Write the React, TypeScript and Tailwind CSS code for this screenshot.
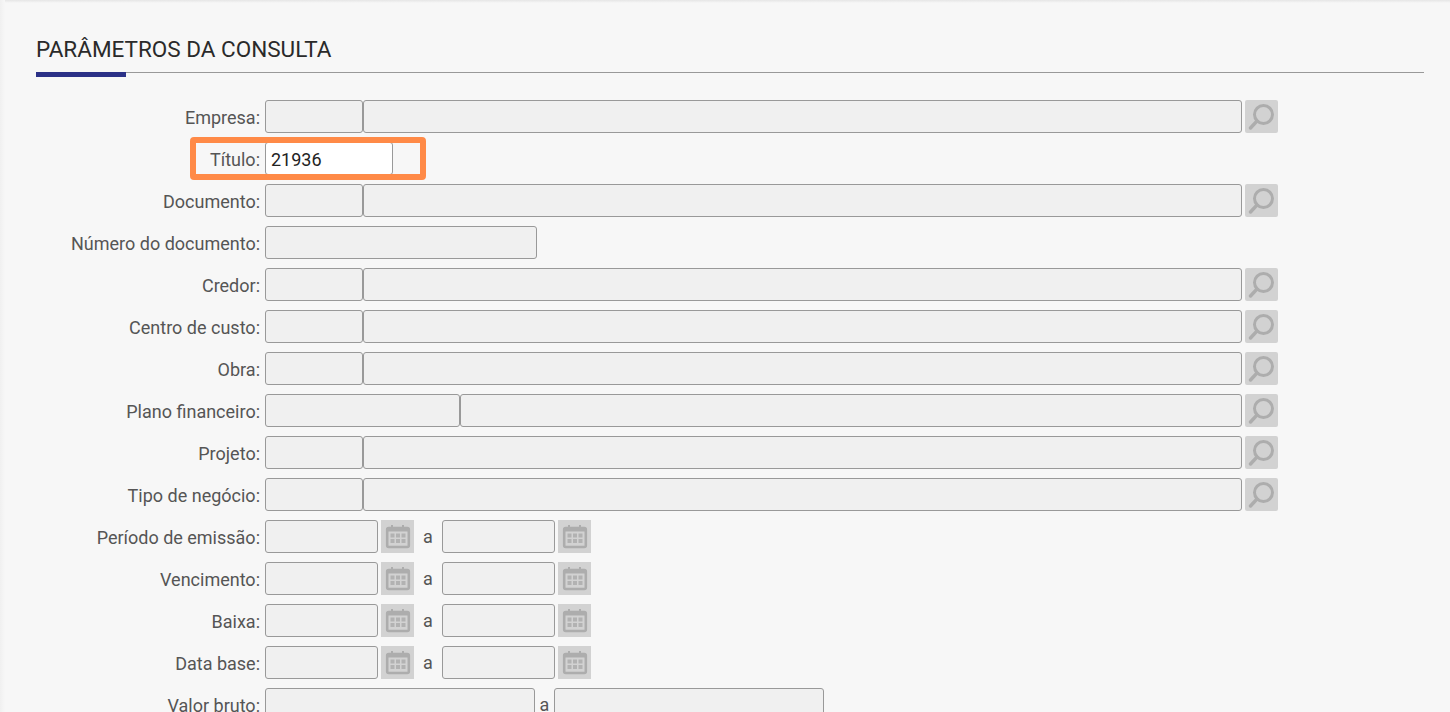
const inputBase = "h-[33px] rounded-[3px] border border-[#999] bg-[#f0f0f0] shrink-0";

function SearchButton() {
  return (
    <div className="w-[33px] h-[33px] ml-[3px] bg-[#d2d2d2] rounded-[2px] shrink-0">
      <svg className="blur-[0.4px]" width="33" height="33" viewBox="0 0 33 33" fill="none" stroke="#adadad" strokeLinecap="round">
        <circle cx="18.5" cy="14.5" r="9" strokeWidth="3" />
        <line x1="12" y1="21" x2="5.5" y2="28" strokeWidth="3.4" />
      </svg>
    </div>
  );
}

function CalendarButton() {
  return (
    <div className="w-[33px] h-[33px] ml-[3px] bg-[#d2d2d2] shrink-0">
      <svg className="blur-[0.4px]" width="33" height="33" viewBox="0 0 33 33" fill="none">
        <rect x="6.2" y="8" width="21.6" height="19" rx="1.5" stroke="#adadad" strokeWidth="2.6" />
        <rect x="6.2" y="8" width="21.6" height="3.5" fill="#adadad" />
        <rect x="10" y="5" width="2" height="4" fill="#adadad" />
        <rect x="21" y="5" width="2" height="4" fill="#adadad" />
        <g fill="#b2b2b2">
          <rect x="9.5" y="13.5" width="4" height="4" />
          <rect x="15" y="13.5" width="4" height="4" />
          <rect x="20.5" y="13.5" width="4" height="4" />
          <rect x="9.5" y="19" width="4" height="4" />
          <rect x="15" y="19" width="4" height="4" />
          <rect x="20.5" y="19" width="4" height="4" />
        </g>
      </svg>
    </div>
  );
}

function Row({ label, children }: { label: string; children: React.ReactNode }) {
  return (
    <div className="flex items-center h-[33px] mb-[9px]">
      <label className="w-[224px] mr-[5px] pt-[2px] text-right text-[#555] whitespace-nowrap shrink-0">{label}</label>
      {children}
    </div>
  );
}

function LookupRow({ label, codeWidth = "w-[98px]" }: { label: string; codeWidth?: string }) {
  return (
    <Row label={label}>
      <div className={`${inputBase} ${codeWidth}`}></div>
      <div className={`${inputBase} flex-1`}></div>
      <SearchButton />
    </Row>
  );
}

function DateRow({ label }: { label: string }) {
  return (
    <Row label={label}>
      <div className={`${inputBase} w-[113px]`}></div>
      <CalendarButton />
      <span className="w-[28px] text-center text-[#555]">a</span>
      <div className={`${inputBase} w-[113px]`}></div>
      <CalendarButton />
    </Row>
  );
}

export default function App() {
  return (
    <div className="relative h-[712px] overflow-hidden bg-[#f7f7f7] font-['Roboto',sans-serif] text-[18px]">
      <div className="absolute inset-x-0 top-0 h-[3px] bg-gradient-to-b from-[#e6e6e6] to-[#f7f7f7]"></div>
      <div className="absolute inset-y-0 left-0 w-[5px] bg-gradient-to-r from-[#f0f0f0] to-[#f7f7f7]"></div>

      <div className="pl-[36px] pr-[26px] pt-[36px]">
        <h2 className="text-[22.5px] leading-[27px] text-[#2a2a2a] uppercase">Parâmetros da consulta</h2>
        <div className="relative mt-[9px] h-px bg-[#999]">
          <div className="absolute left-0 top-0 w-[90px] h-[5px] bg-[#2b3187]"></div>
        </div>
      </div>

      <div className="pl-[36px] pt-[27px] w-[1278px]">
        <LookupRow label="Empresa:" />
        <Row label="Título:">
          <div className="h-[33px] w-[128px] rounded-[3px] border border-[#999] bg-white pl-[5px] pt-[1px] text-[#222] leading-[31px] shrink-0">21936</div>
        </Row>
        <LookupRow label="Documento:" />
        <Row label="Número do documento:">
          <div className={`${inputBase} w-[272px]`}></div>
        </Row>
        <LookupRow label="Credor:" />
        <LookupRow label="Centro de custo:" />
        <LookupRow label="Obra:" />
        <LookupRow label="Plano financeiro:" codeWidth="w-[195px]" />
        <LookupRow label="Projeto:" />
        <LookupRow label="Tipo de negócio:" />
        <DateRow label="Período de emissão:" />
        <DateRow label="Vencimento:" />
        <DateRow label="Baixa:" />
        <DateRow label="Data base:" />
        <Row label="Valor bruto:">
          <div className={`${inputBase} w-[270px]`}></div>
          <span className="w-[19px] text-center text-[#555]">a</span>
          <div className={`${inputBase} w-[270px]`}></div>
        </Row>
      </div>

      {/* destaque laranja em volta do campo Título */}
      <div className="absolute left-[190px] top-[137px] w-[236px] h-[42.5px] rounded-[4px] border-[6px] border-[#ff8a47] blur-[0.3px]"></div>
    </div>
  );
}
